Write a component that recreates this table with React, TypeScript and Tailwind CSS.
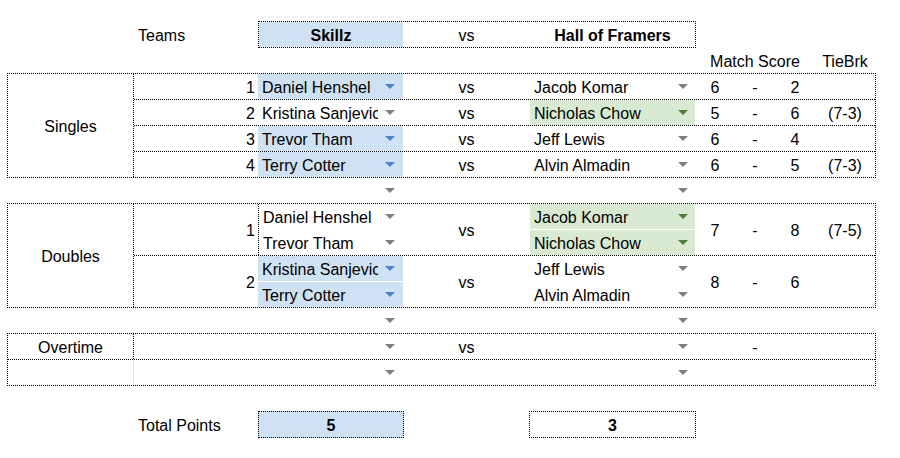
import React from "react";

type Tone = "none" | "blue" | "green";

const fills: Record<Tone, string> = {
  none: "",
  blue: "bg-[#cfe2f3]",
  green: "bg-[#d9ead3]",
};

const arrowFill: Record<Tone, string> = {
  none: "#808080",
  blue: "#4a86d0",
  green: "#4e7d36",
};

function Arrow({ tone = "none" }: { tone?: Tone }) {
  return (
    <svg width="10" height="5" viewBox="0 0 10 5" className="ml-auto shrink-0">
      <path d="M0 0H10L5 5Z" fill={arrowFill[tone]} />
    </svg>
  );
}

// dropdown cell, as in the sheet: name on the left, little chip arrow on the right
function Pick({ name = "", tone = "none", pr = "pr-[8px]" }: { name?: string; tone?: Tone; pr?: string }) {
  return (
    <div className={`flex h-full items-center pl-[4px] ${pr} ${fills[tone]}`}>
      <span className="w-[116px] overflow-hidden whitespace-nowrap pt-[2px]">{name}</span>
      <Arrow tone={tone} />
    </div>
  );
}

type Single = { n: number; home: string; homeTone: Tone; away: string; awayTone: Tone; a: string; b: string; tb?: string };

const singles: Single[] = [
  { n: 1, home: "Daniel Henshel", homeTone: "blue", away: "Jacob Komar", awayTone: "none", a: "6", b: "2" },
  { n: 2, home: "Kristina Sanjevic", homeTone: "none", away: "Nicholas Chow", awayTone: "green", a: "5", b: "6", tb: "(7-3)" },
  { n: 3, home: "Trevor Tham", homeTone: "blue", away: "Jeff Lewis", awayTone: "none", a: "6", b: "4" },
  { n: 4, home: "Terry Cotter", homeTone: "blue", away: "Alvin Almadin", awayTone: "none", a: "6", b: "5", tb: "(7-3)" },
];

type Double = { n: number; home: [string, string]; homeTone: Tone; away: [string, string]; awayTone: Tone; a: string; b: string; tb?: string };

const doubles: Double[] = [
  { n: 1, home: ["Daniel Henshel", "Trevor Tham"], homeTone: "none", away: ["Jacob Komar", "Nicholas Chow"], awayTone: "green", a: "7", b: "8", tb: "(7-5)" },
  { n: 2, home: ["Kristina Sanjevic", "Terry Cotter"], homeTone: "blue", away: ["Jeff Lewis", "Alvin Almadin"], awayTone: "none", a: "8", b: "6" },
];

function Scores({ a = "", dash = "-", b = "", tb = "" }: { a?: string; dash?: string; b?: string; tb?: string }) {
  return (
    <>
      <div className="flex w-[40px] items-center justify-center pt-[2px]">{a}</div>
      <div className="flex w-[40px] items-center justify-center pt-[2px]">{dash}</div>
      <div className="flex w-[40px] items-center justify-center pt-[2px]">{b}</div>
      <div className="flex w-[60px] items-center justify-center pt-[2px]">{tb}</div>
    </>
  );
}

function SinglesRow({ s, last }: { s: Single; last: boolean }) {
  return (
    <div className={`flex ${last ? "h-[25px]" : "h-[26px] border-b border-dotted border-black"}`}>
      <div className="w-[124px] pr-[3px] pt-[1px] text-right">{s.n}</div>
      <div className="w-[145px]">
        <Pick name={s.home} tone={s.homeTone} />
      </div>
      <div className="w-[127px] pt-[1px] text-center">vs</div>
      <div className="w-[165px]">
        <Pick name={s.away} tone={s.awayTone} pr="pr-[7px]" />
      </div>
      <Scores a={s.a} b={s.b} tb={s.tb} />
    </div>
  );
}

function PairRow({ d, first }: { d: Double; first: boolean }) {
  return (
    <div className={`flex ${first ? "h-[52px] border-b border-dotted border-black" : "h-[51px]"}`}>
      <div className="flex w-[124px] items-center justify-end pr-[3px] pt-[2px]">{d.n}</div>
      <div className={`flex w-[145px] flex-col gap-[1px] ${first ? "border-l border-dotted border-black" : ""}`}>
        <div className="h-[25px]">
          <Pick name={d.home[0]} tone={d.homeTone} />
        </div>
        <div className="h-[25px]">
          <Pick name={d.home[1]} tone={d.homeTone} />
        </div>
      </div>
      <div className="flex w-[127px] items-center justify-center pt-[2px]">vs</div>
      <div className="flex w-[165px] flex-col gap-[1px]">
        <div className="h-[25px]">
          <Pick name={d.away[0]} tone={d.awayTone} pr="pr-[7px]" />
        </div>
        <div className="h-[25px]">
          <Pick name={d.away[1]} tone={d.awayTone} pr="pr-[7px]" />
        </div>
      </div>
      <Scores a={d.a} b={d.b} tb={d.tb} />
    </div>
  );
}

function ArrowRow() {
  return (
    <div className="flex h-[25px]">
      <div className="w-[258px]" />
      <div className="w-[145px]">
        <Pick />
      </div>
      <div className="w-[127px]" />
      <div className="w-[165px]">
        <Pick pr="pr-[7px]" />
      </div>
    </div>
  );
}

export default function App() {
  return (
    <div className="h-[458px] w-[900px] bg-white pt-[21px] font-['Liberation_Sans',Arial,sans-serif] text-[16px] leading-[25px] text-black">
      {/* team names */}
      <div className="flex h-[27px]">
        <div className="w-[134px]" />
        <div className="flex w-[124px] items-center pl-[4px] pt-[2px]">Teams</div>
        <div className="flex w-[438px] border border-dotted border-black">
          <div className="w-[144px] bg-[#cfe2f3] pt-[1px] text-center font-bold">Skillz</div>
          <div className="w-[127px] pt-[1px] text-center">vs</div>
          <div className="w-[165px] pt-[1px] text-center font-bold">Hall of Framers</div>
        </div>
      </div>

      <div className="flex h-[25px] pt-[1px]">
        <div className="w-[695px]" />
        <div className="w-[120px] text-center">Match Score</div>
        <div className="w-[60px] text-center">TieBrk</div>
      </div>

      {/* singles */}
      <div className="ml-[7px] flex h-[105px] w-[869px] border border-dotted border-black">
        <div className="flex w-[126px] items-center justify-center border-r border-dotted border-black pt-[2px]">Singles</div>
        <div className="flex flex-col">
          {singles.map((s, i) => (
            <SinglesRow key={s.n} s={s} last={i === singles.length - 1} />
          ))}
        </div>
      </div>

      <ArrowRow />

      {/* doubles */}
      <div className="ml-[7px] flex h-[105px] w-[869px] border border-dotted border-black">
        <div className="flex w-[126px] items-center justify-center border-r border-dotted border-black pt-[2px]">Doubles</div>
        <div className="flex flex-col">
          {doubles.map((d, i) => (
            <PairRow key={d.n} d={d} first={i === 0} />
          ))}
        </div>
      </div>

      <ArrowRow />

      {/* overtime */}
      <div className="ml-[7px] flex h-[53px] w-[869px] flex-col border border-dotted border-black">
        <div className="flex h-[26px] border-b border-dotted border-black">
          <div className="w-[126px] border-r border-dotted border-black pt-[1px] text-center">Overtime</div>
          <div className="w-[124px]" />
          <div className="w-[145px]">
            <Pick />
          </div>
          <div className="w-[127px] pt-[1px] text-center">vs</div>
          <div className="w-[165px]">
            <Pick pr="pr-[7px]" />
          </div>
          <Scores />
        </div>
        <div className="flex h-[25px]">
          <div className="w-[126px] border-r border-[#e0e0e0]" />
          <div className="w-[124px]" />
          <div className="w-[145px]">
            <Pick />
          </div>
          <div className="w-[127px]" />
          <div className="w-[165px]">
            <Pick pr="pr-[7px]" />
          </div>
        </div>
      </div>

      <div className="h-[25px]" />

      {/* totals */}
      <div className="flex h-[27px]">
        <div className="w-[134px]" />
        <div className="flex w-[124px] items-center pl-[4px] pt-[2px]">Total Points</div>
        <div className="w-[146px] border border-dotted border-black bg-[#cfe2f3] pt-[1px] text-center font-bold">5</div>
        <div className="w-[125px]" />
        <div className="w-[167px] border border-dotted border-black pt-[1px] text-center font-bold">3</div>
      </div>
    </div>
  );
}
